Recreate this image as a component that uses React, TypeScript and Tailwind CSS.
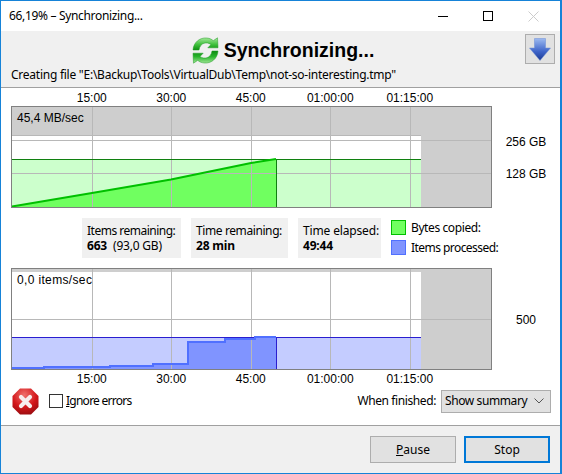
import React from "react";

const ui = "font-['Noto_Sans','Open_Sans',sans-serif] text-[12px] text-[#000]";
const arial = "font-['Liberation_Sans',Arial,sans-serif] text-[12px] text-black";

function SyncIcon() {
  return (
    <svg width="27" height="27" viewBox="0 0 27 27">
      <defs>
        <linearGradient id="g1" x1="0" y1="0" x2="0" y2="1">
          <stop offset="0" stopColor="#a4e89a" />
          <stop offset="0.55" stopColor="#3fc03c" />
          <stop offset="1" stopColor="#0c8f10" />
        </linearGradient>
        <linearGradient id="g2" x1="0" y1="0" x2="0" y2="1">
          <stop offset="0" stopColor="#0c8a12" />
          <stop offset="0.45" stopColor="#27b32a" />
          <stop offset="1" stopColor="#9fe695" />
        </linearGradient>
      </defs>
      <path d="M1 13 C1.5 5 8 0.5 14.5 1 C18 1.2 20 2.5 21.2 3.7 L25.5 0.8 L26 10.8 L15.8 10.8 L19 7.6 C17 6 14.5 5.6 12 6.3 C9.5 7 7.5 9.5 7 13 Z" fill="url(#g1)" stroke="#1f9a22" strokeWidth="0.5" />
      <path d="M26 14 C25.5 22 19 26.5 12.5 26 C9 25.8 7 24.5 5.8 23.3 L1.5 26.2 L1 16.2 L11.2 16.2 L8 19.4 C10 21 12.5 21.4 15 20.7 C17.5 20 19.5 17.5 20 14 Z" fill="url(#g2)" stroke="#1f9a22" strokeWidth="0.5" />
    </svg>
  );
}

function DownIcon() {
  return (
    <svg width="22" height="23" viewBox="0 0 22 23">
      <defs>
        <linearGradient id="d1" x1="0" y1="0" x2="0" y2="1">
          <stop offset="0" stopColor="#9dbaf0" />
          <stop offset="0.6" stopColor="#3d63c8" />
          <stop offset="1" stopColor="#1c3a92" />
        </linearGradient>
      </defs>
      <path d="M5.5 0.5 H16.5 V10 H21.5 L11 22.5 L0.5 10 H5.5 Z" fill="url(#d1)" stroke="#6a8cd6" strokeWidth="0.5" />
    </svg>
  );
}

function ErrorIcon() {
  return (
    <svg width="27" height="27" viewBox="0 0 27 27">
      <defs>
        <radialGradient id="e1" cx="0.45" cy="0.25" r="0.85">
          <stop offset="0" stopColor="#f0706c" />
          <stop offset="0.55" stopColor="#d3161a" />
          <stop offset="1" stopColor="#8c0a0e" />
        </radialGradient>
      </defs>
      <path d="M8 0.5 H19 L26.5 8 V19 L19 26.5 H8 L0.5 19 V8 Z" fill="url(#e1)" />
      <path d="M9 9 L18 18 M18 9 L9 18" stroke="#f7eeee" strokeWidth="4.2" strokeLinecap="round" />
    </svg>
  );
}

const X = [81, 160, 240, 319, 399];

function BytesChart() {
  return (
    <svg width="481" height="102" viewBox="0 0 481 102" className="block shrink-0" shapeRendering="crispEdges">
      <rect x="0" y="0" width="481" height="102" fill="#cecece" />
      <rect x="1" y="30" width="409" height="71" fill="#fff" />
      <rect x="1" y="53" width="409" height="48" fill="#ccffcc" />
      <path d="M1 101 L81 87 L160 73.5 L240 57 L265 53 L265 101 Z" fill="#70ff60" shapeRendering="auto" />
      {X.map((x) => <rect key={x} x={x} y="1" width="1" height="100" fill="#b8b8b8" />)}
      <rect x="1" y="29" width="409" height="1" fill="#b8b8b8" />
      <rect x="1" y="34" width="479" height="1" fill="#b8b8b8" />
      <rect x="1" y="67" width="479" height="1" fill="#b8b8b8" />
      <rect x="1" y="53" width="409" height="1" fill="#108010" />
      <path d="M1 100.5 L81 87 L160 73.5 L240 57 L265 53" stroke="#00c000" strokeWidth="2" fill="none" shapeRendering="auto" />
      <rect x="265" y="53" width="1" height="48" fill="#108010" />
      <rect x="0.5" y="0.5" width="480" height="101" fill="none" stroke="#808080" />
    </svg>
  );
}

function ItemsChart() {
  return (
    <svg width="481" height="102" viewBox="0 0 481 102" className="block shrink-0" shapeRendering="crispEdges">
      <rect x="0" y="0" width="481" height="102" fill="#cecece" />
      <rect x="1" y="4" width="409" height="97" fill="#fff" />
      <rect x="1" y="69" width="409" height="32" fill="#c4ccff" />
      <path d="M1 100 L33 100 L33 99 L99 99 L99 98 L142 98 L142 96 L177 96 L177 74 L214 74 L214 71 L244 71 L244 69 L265 69 L265 101 L1 101 Z" fill="#8094ff" />
      {X.map((x) => <rect key={x} x={x} y="1" width="1" height="100" fill="#b8b8b8" />)}
      <rect x="1" y="51" width="479" height="1" fill="#b8b8b8" />
      <rect x="1" y="69" width="409" height="1" fill="#2a1ed0" />
      <path d="M1 100 L33 100 L33 99 L99 99 L99 98 L142 98 L142 96 L177 96 L177 74 L214 74 L214 71 L244 71 L244 69 L265 69" stroke="#5070ff" strokeWidth="2" fill="none" />
      <rect x="265" y="69" width="1" height="32" fill="#2a1ed0" />
      <rect x="0.5" y="0.5" width="480" height="101" fill="none" stroke="#808080" />
    </svg>
  );
}

function Ticks({ h }: { h: string }) {
  return (
    <div className={`flex pl-[51px] ${h} items-center ${arial}`}>
      {["15:00", "30:00", "45:00", "01:00:00", "01:15:00"].map((t) => (
        <div key={t} className="w-[79.5px] text-center whitespace-nowrap">{t}</div>
      ))}
    </div>
  );
}

function Stat({ w, track, label, value, extra }: { w: string; track: string; label: string; value: string; extra?: string }) {
  return (
    <div className={`${w} h-[40px] bg-[#f0f0f0] pl-[5px] pt-[5px] leading-[15px] ${ui}`}>
      <div className={`whitespace-nowrap ${track}`}>{label}</div>
      <div className="whitespace-nowrap tracking-[-0.2px]">
        <span className="font-bold">{value}</span>
        {extra ? <span className="ml-[6px]">{extra}</span> : null}
      </div>
    </div>
  );
}

export default function App() {
  return (
    <div className="w-[562px] h-[474px] bg-white flex flex-col border-t border-b border-l border-r-2 border-[#1683d8] overflow-hidden">
      <div className={`h-[30px] shrink-0 flex items-center justify-between ${ui}`}>
        <span className="pl-[8px] pb-[1px] tracking-[-0.33px]">66,19% – Synchronizing...</span>
        <div className="flex items-center">
          <div className="w-[45px] flex justify-center"><svg width="11" height="11"><rect x="0" y="5" width="10" height="1" fill="#000" /></svg></div>
          <div className="w-[45px] flex justify-center"><svg width="11" height="11"><rect x="0.5" y="0.5" width="9" height="9" fill="none" stroke="#000" /></svg></div>
          <div className="w-[45px] flex justify-center mr-[4px]"><svg width="11" height="11"><path d="M0.5 0.5 L10.5 10.5 M10.5 0.5 L0.5 10.5" stroke="#cccccc" /></svg></div>
        </div>
      </div>

      <div className="h-[57px] shrink-0 bg-[#f0f0f0] border-b border-[#a0a0a0] flex flex-col">
        <div className="grid grid-cols-[1fr_auto_1fr] h-[36px] items-center">
          <div />
          <div className="flex items-center gap-[5px] pl-[5px] pt-[2px]">
            <SyncIcon />
            <span className="font-['Liberation_Sans',Arial,sans-serif] font-bold text-[19.5px] leading-[24px] text-black">Synchronizing...</span>
          </div>
          <div className="flex justify-end pr-[5px]">
            <div className="w-[30px] h-[30px] border border-[#adadad] bg-[#e1e1e1] flex items-center justify-center"><DownIcon /></div>
          </div>
        </div>
        <div className={`pl-[10px] leading-[16px] whitespace-nowrap tracking-[-0.25px] ${ui}`}>Creating file "E:\Backup\Tools\VirtualDub\Temp\not-so-interesting.tmp"</div>
      </div>

      <div className="flex-1 flex flex-col pt-[2px]">
        <Ticks h="h-[16px]" />
        <div className="flex pl-[10px]">
          <div className="relative">
            <BytesChart />
            <span className={`absolute left-[6px] top-[3px] ${arial}`}>45,4 MB/sec</span>
          </div>
          <div className={`w-[70px] flex flex-col items-center pt-[28px] gap-[16px] leading-[16px] ${arial}`}>
            <span>256 GB</span>
            <span>128 GB</span>
          </div>
        </div>

        <div className="flex mt-[10px] pl-[81px] h-[40px]">
          <Stat w="w-[99px]" track="tracking-[-0.5px]" label="Items remaining:" value="663" extra="(93,0 GB)" />
          <div className="w-[10px]" />
          <Stat w="w-[97px]" track="tracking-[-0.4px]" label="Time remaining:" value="28 min" />
          <div className="w-[10px]" />
          <Stat w="w-[83px]" track="tracking-[-0.15px]" label="Time elapsed:" value="49:44" />
          <div className={`ml-[10px] flex flex-col gap-[5px] pt-[2px] ${ui}`}>
            <div className="flex items-center gap-[5px] h-[15px]">
              <div className="w-[15px] h-[15px] bg-[#70ff60] border border-[#00c000]" />
              <span className="whitespace-nowrap tracking-[-0.4px]">Bytes copied:</span>
            </div>
            <div className="flex items-center gap-[5px] h-[15px]">
              <div className="w-[15px] h-[15px] bg-[#8094ff] border border-[#5070ff]" />
              <span className="whitespace-nowrap tracking-[-0.55px]">Items processed:</span>
            </div>
          </div>
        </div>

        <div className="flex pl-[10px] mt-[10px]">
          <div className="relative">
            <ItemsChart />
            <span className={`absolute left-[6px] top-[3px] tracking-[0.35px] ${arial}`}>0,0 items/sec</span>
          </div>
          <div className={`w-[70px] flex flex-col items-center pt-[44px] leading-[16px] ${arial}`}>
            <span>500</span>
          </div>
        </div>
        <Ticks h="h-[17px]" />

        <div className="flex items-center justify-between pl-[11px] pr-[9px] h-[28px]">
          <div className="flex items-center">
            <ErrorIcon />
            <div className="ml-[10px] w-[14px] h-[14px] border border-[#333] bg-white" />
            <span className={`ml-[3px] tracking-[-0.75px] ${ui}`}><span className="underline">I</span>gnore errors</span>
          </div>
          <div className={`flex items-center ${ui}`}>
            <span className="mr-[5px] tracking-[-0.4px]">When finished:</span>
            <div className="w-[110px] h-[23px] bg-[#e1e1e1] border border-[#adadad] flex items-center justify-between pl-[3px] pr-[6px]">
              <span className="tracking-[-0.4px]">Show summary</span>
              <svg width="10" height="6"><path d="M0.5 0.5 L5 5 L9.5 0.5" fill="none" stroke="#555" /></svg>
            </div>
          </div>
        </div>

        <div className="mt-auto h-[48px] bg-[#f0f0f0] border-t border-[#a0a0a0] flex justify-end items-start pt-[10px] pr-[10px] gap-[8px]">
          <div className={`w-[86px] h-[27px] bg-[#e1e1e1] border border-[#adadad] flex items-center justify-center ${ui}`}><span><span className="underline">P</span>ause</span></div>
          <div className={`w-[86px] h-[27px] bg-[#e1e1e1] border-2 border-[#0078d7] flex items-center justify-center ${ui}`}>Stop</div>
        </div>
      </div>
    </div>
  );
}
